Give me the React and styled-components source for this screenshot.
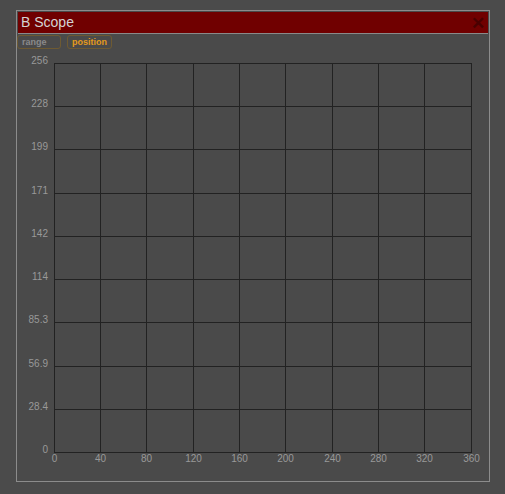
import React from "react";
import styled, { createGlobalStyle } from "styled-components";

const GlobalStyle = createGlobalStyle`
  html, body {
    margin: 0;
    padding: 0;
    background: #4b4b4b;
    font-family: "Liberation Sans", Arial, sans-serif;
  }
`;

const Page = styled.div`
  padding: 10px 0 0 16px;
  width: 505px;
  height: 494px;
  box-sizing: border-box;
`;

const Frame = styled.div`
  width: 474px;
  height: 472px;
  box-sizing: border-box;
  border: 1px solid #8c8c8c;
  padding: 1px 1px 0 1px;
  background: #4a4a4a;
  display: flex;
  flex-direction: column;
`;

const TitleBar = styled.div`
  height: 21px;
  background: #700000;
  display: flex;
  align-items: center;
  justify-content: space-between;
  padding: 0 3px 0 3px;
  border-bottom: 1px solid #8a8a8a;
`;

const Title = styled.span`
  color: #d4d4d4;
  font-size: 14px;
  line-height: 21px;
`;

const Close = styled.span`
  color: #4a0000;
  font-size: 17px;
  font-weight: bold;
  line-height: 21px;
  margin-top: 2px;
`;

const Toolbar = styled.div`
  display: flex;
  gap: 6px;
  padding: 1px 0 0 0;
  margin-left: -1px;
  height: 14px;
`;

const ModeButton = styled.div`
  width: ${(p) => p.$w}px;
  height: 14px;
  box-sizing: border-box;
  border: 1px solid #6e5a32;
  border-radius: 3px;
  color: ${(p) => (p.$active ? "#e49a1c" : "#8a8a8a")};
  font-size: 9px;
  font-weight: bold;
  line-height: 12px;
  padding-left: 4px;
`;

const Chart = styled.svg`
  display: block;
  margin-top: 1px;
`;

const yLabels = ["256", "228", "199", "171", "142", "114", "85.3", "56.9", "28.4", "0"];
const xLabels = [0, 40, 80, 120, 160, 200, 240, 280, 320, 360];

function Scope() {
  const left = 36;
  const right = 453;
  const top = 13;
  const bottom = 402;
  const cols = 9;
  const rows = 9;
  const cw = (right - left) / cols;
  const rh = (bottom - top) / rows;
  const vx = (i) => Math.floor(left + i * cw + 0.01) + 0.5;
  const hy = (i) => Math.round(top + i * rh) + 0.5;

  return (
    <Chart width="470" height="430">
      {Array.from({ length: cols + 1 }, (_, i) => (
        <line key={"v" + i} x1={vx(i)} x2={vx(i)} y1={top} y2={bottom + 1} stroke="#222" strokeWidth="1" />
      ))}
      {Array.from({ length: rows + 1 }, (_, i) => (
        <line key={"h" + i} x1={left} x2={right + 1} y1={hy(i)} y2={hy(i)} stroke="#222" strokeWidth="1" />
      ))}
      {yLabels.map((t, i) => (
        <text
          key={"y" + t}
          x={left - 6}
          y={hy(i) + 0.5}
          fill="#999"
          fontSize="10"
          textAnchor="end"
          fontFamily="Liberation Sans, Arial, sans-serif"
        >
          {t}
        </text>
      ))}
      {xLabels.map((t, i) => (
        <text
          key={"x" + t}
          x={vx(i)}
          y={bottom + 10}
          fill="#999"
          fontSize="10"
          textAnchor="middle"
          fontFamily="Liberation Sans, Arial, sans-serif"
        >
          {t}
        </text>
      ))}
    </Chart>
  );
}

export default function App() {
  return (
    <Page>
      <GlobalStyle />
      <Frame>
        <TitleBar>
          <Title>B Scope</Title>
          <Close>✕</Close>
        </TitleBar>
        <Toolbar>
          <ModeButton $w={44}>range</ModeButton>
          <ModeButton $w={45} $active>
            position
          </ModeButton>
        </Toolbar>
        <Scope />
      </Frame>
    </Page>
  );
}
